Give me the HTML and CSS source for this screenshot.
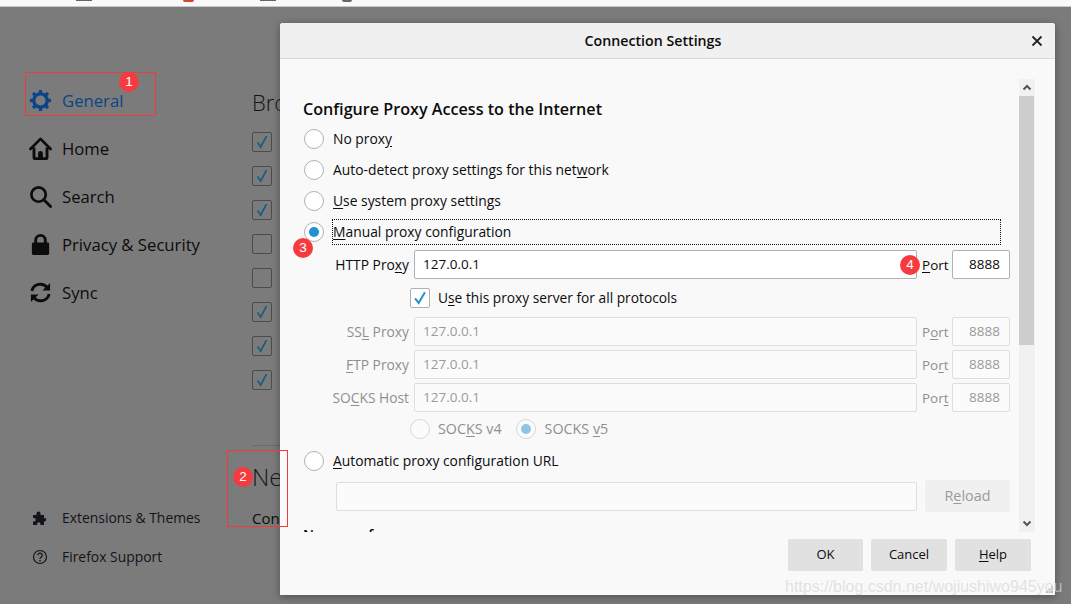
FILE: index.html
```html
<!DOCTYPE html>
<html lang="en">
<head>
    <meta charset="UTF-8">
    <title>Connection Settings</title>
    <link rel="stylesheet" href="styles.css">
</head>
<body>
    <div class="topstrip">
        <span class="tab-mark tm1"></span>
        <span class="tab-mark tm2"></span>
        <span class="tab-mark tm3"></span>
        <span class="tab-mark tm4"></span>
    </div>

    <div class="prefs">
        <nav class="sidebar">
            <ul class="cats">
                <li class="active">
                    <svg class="cat-icon" viewBox="0 0 24 24"><circle cx="12" cy="12" r="7" fill="none" stroke="currentColor" stroke-width="3.400"/><path d="M12 1v5M12 18v5M1 12h5M18 12h5M4.200 4.200l3.600 3.600M16.200 16.200l3.600 3.600M19.800 4.200l-3.600 3.600M7.800 16.200l-3.600 3.600" stroke="currentColor" stroke-width="3.400"/></svg>
                    General
                </li>
                <li>
                    <svg class="cat-icon" viewBox="0 0 24 24"><path d="M1.500 12.500 12 2l10.500 10.500" fill="none" stroke="currentColor" stroke-width="2.800" stroke-linejoin="round" stroke-linecap="round"/><path d="M5.200 11v10a1.500 1.500 0 0 0 1.500 1.500h10.600a1.500 1.500 0 0 0 1.500-1.500V11" fill="none" stroke="currentColor" stroke-width="3"/><path d="M9.500 22v-5a2.500 2.500 0 0 1 5 0v5z" fill="currentColor"/></svg>
                    Home
                </li>
                <li>
                    <svg class="cat-icon" viewBox="0 0 24 24"><circle cx="10" cy="10" r="7.500" fill="none" stroke="currentColor" stroke-width="2.800"/><path d="m15.500 15.500 7 7" stroke="currentColor" stroke-width="3" stroke-linecap="round"/></svg>
                    Search
                </li>
                <li>
                    <svg class="cat-icon" viewBox="0 0 24 24"><path d="M7 11V7.500a5 5 0 0 1 10 0V11" fill="none" stroke="currentColor" stroke-width="3"/><rect x="3" y="10" width="18" height="13" rx="1.500" fill="currentColor"/></svg>
                    Privacy &amp; Security
                </li>
                <li>
                    <svg class="cat-icon" viewBox="0 0 24 24"><path d="M3 10.500A9 9 0 0 1 19 7" fill="none" stroke="currentColor" stroke-width="3"/><path d="M22 2v8h-8z" fill="currentColor"/><path d="M21 13.500A9 9 0 0 1 5 17" fill="none" stroke="currentColor" stroke-width="3"/><path d="M2 22v-8h8z" fill="currentColor"/></svg>
                    Sync
                </li>
            </ul>
            <ul class="links">
                <li>
                    <svg class="link-icon" viewBox="0 0 16 16"><path d="M1 5h3.500V3.500a2 2 0 0 1 4 0V5H12v3h.5a1.800 1.800 0 0 1 0 3.600H12V15H8.500v-1a1.700 1.700 0 0 0-3.400 0v1H1v-3.500h1a1.800 1.800 0 0 0 0-3.600H1z" fill="currentColor"/></svg>
                    Extensions &amp; Themes
                </li>
                <li>
                    <svg class="link-icon" viewBox="0 0 16 16"><circle cx="8" cy="8" r="6.500" fill="none" stroke="currentColor" stroke-width="1.200"/><path d="M5.800 6.300a2.200 2.200 0 1 1 3.300 1.900C8.300 8.700 8 9 8 10" fill="none" stroke="currentColor" stroke-width="1.300"/><circle cx="8" cy="11.800" r=".9" fill="currentColor"/></svg>
                    Firefox Support
                </li>
            </ul>
        </nav>
        <main class="content">
            <h2 class="pane-title">Browsing</h2>
            <div class="checks">
                <span class="pref-check on"><svg viewBox="0 0 20 20"><path d="m5 10.500 3.500 5L15 3.500"/></svg></span>
                <span class="pref-check on"><svg viewBox="0 0 20 20"><path d="m5 10.500 3.500 5L15 3.500"/></svg></span>
                <span class="pref-check on"><svg viewBox="0 0 20 20"><path d="m5 10.500 3.500 5L15 3.500"/></svg></span>
                <span class="pref-check"></span>
                <span class="pref-check"></span>
                <span class="pref-check on"><svg viewBox="0 0 20 20"><path d="m5 10.500 3.500 5L15 3.500"/></svg></span>
                <span class="pref-check on"><svg viewBox="0 0 20 20"><path d="m5 10.500 3.500 5L15 3.500"/></svg></span>
                <span class="pref-check on"><svg viewBox="0 0 20 20"><path d="m5 10.500 3.500 5L15 3.500"/></svg></span>
            </div>
            <hr class="pane-rule">
            <h2 class="pane-title net">Network Settings</h2>
            <p class="pane-text">Configure</p>
        </main>
    </div>

    <section class="dialog">
        <header class="dialog-head">
            <span class="dialog-title">Connection Settings</span>
            <svg class="close" viewBox="0 0 12 12"><path d="m1.500 1.500 9 9M10.500 1.500l-9 9"/></svg>
        </header>
        <div class="dialog-body">
            <div class="scroll-pane">
                <h3 class="section-title">Configure Proxy Access to the Internet</h3>

                <label class="radio-row"><span class="radio"></span><span class="row-text">No prox<u>y</u></span></label>
                <label class="radio-row"><span class="radio"></span><span class="row-text">Auto-detect proxy settings for this net<u>w</u>ork</span></label>
                <label class="radio-row"><span class="radio"></span><span class="row-text"><u>U</u>se system proxy settings</span></label>
                <label class="radio-row manual"><span class="radio checked"></span><span class="focus-label"><u>M</u>anual proxy configuration</span></label>

                <div class="proxy-row">
                    <span class="proxy-label">HTTP Pro<u>x</u>y</span>
                    <span class="field host">127.0.0.1</span>
                    <span class="port-label"><u>P</u>ort</span>
                    <span class="field port">8888</span>
                </div>
                <label class="all-protocols"><span class="dlg-check"><svg viewBox="0 0 20 20"><path d="m4.500 10.500 4 5L15.500 3.500"/></svg></span><span class="row-text">U<u>s</u>e this proxy server for all protocols</span></label>

                <div class="proxy-row off">
                    <span class="proxy-label">SS<u>L</u> Proxy</span>
                    <span class="field host">127.0.0.1</span>
                    <span class="port-label">P<u>o</u>rt</span>
                    <span class="field port">8888</span>
                </div>
                <div class="proxy-row off">
                    <span class="proxy-label"><u>F</u>TP Proxy</span>
                    <span class="field host">127.0.0.1</span>
                    <span class="port-label">Po<u>r</u>t</span>
                    <span class="field port">8888</span>
                </div>
                <div class="proxy-row off">
                    <span class="proxy-label">SO<u>C</u>KS Host</span>
                    <span class="field host">127.0.0.1</span>
                    <span class="port-label">Por<u>t</u></span>
                    <span class="field port">8888</span>
                </div>

                <div class="socks-row">
                    <span class="radio off"></span><span class="socks-text row-text">SOC<u>K</u>S v4</span>
                    <span class="radio off checked"></span><span class="socks-text row-text">SOCKS <u>v</u>5</span>
                </div>

                <label class="radio-row auto"><span class="radio"></span><span class="row-text"><u>A</u>utomatic proxy configuration URL</span></label>
                <div class="url-row">
                    <span class="field url"></span>
                    <span class="reload">R<u>e</u>load</span>
                </div>
                <h3 class="section-title next">No proxy for</h3>
            </div>
            <div class="scrollbar">
                <svg class="arrow" viewBox="0 0 10 6"><path d="m1.500 5 3.500-3.500L8.500 5"/></svg>
                <div class="track"><div class="thumb"></div></div>
                <svg class="arrow" viewBox="0 0 10 6"><path d="m1.500 1 3.500 3.500L8.500 1"/></svg>
            </div>
        </div>
        <footer class="dialog-foot">
            <span class="btn ok">OK</span>
            <span class="btn">Cancel</span>
            <span class="btn"><u>H</u>elp</span>
        </footer>
        <svg class="grip" viewBox="0 0 7 7"><path d="M5 0h2v2H5zM2.500 2.500h2v2h-2zM5 2.500h2v2H5zM0 5h2v2H0zM2.500 5h2v2h-2zM5 5h2v2H5z"/></svg>
    </section>

    <div class="mark box-general"></div>
    <div class="mark box-network"></div>
    <span class="badge b1">1</span>
    <span class="badge b2">2</span>
    <span class="badge b3">3</span>
    <span class="badge b4">4</span>
    <span class="watermark">https://blog.csdn.net/wojiushiwo945you</span>
</body>
</html>
```

FILE: styles.css
```css
* {
    margin: 0;
    padding: 0;
    box-sizing: border-box;
}

html, body {
    width: 1071px;
    height: 604px;
    overflow: hidden;
}

body {
    position: relative;
    background-color: #7b7b7b;
    color: #0c0c0d;
    font-family: "Open Sans", "Noto Sans", sans-serif;
    font-size: 13.5px;
}

ul {
    list-style: none;
}

u {
    text-underline-offset: 2px;
}

/* strip of the browser chrome above the modal overlay */
.topstrip {
    height: 7px;
    background-color: #f9f9f9;
    border-bottom: 1px solid #c8c8c8;
    position: relative;
}

.tab-mark {
    position: absolute;
    top: 0;
    width: 16px;
    height: 1px;
    background-color: #666;
}

.tm1 { left: 76px; }
.tm2 { left: 183px; width: 11px; height: 2px; background-color: #d9452f; border-radius: 0 0 5px 5px; }
.tm3 { left: 260px; }
.tm4 { left: 342px; width: 10px; height: 2px; border-radius: 0 0 5px 5px; }

.prefs {
    display: flex;
    height: 597px;
}

.sidebar {
    width: 252px;
    padding: 69px 0 0 29px;
    display: flex;
    flex-direction: column;
    font-size: 16.7px;
}

.cats li {
    height: 48px;
    display: flex;
    align-items: center;
    gap: 10px;
}

.cats .active {
    color: #0c4488;
}

.cat-icon {
    width: 23px;
    height: 23px;
    flex: none;
}

.links {
    margin-top: 182px;
    font-size: 13.9px;
    color: #14141a;
}

.links li {
    height: 39px;
    display: flex;
    align-items: center;
    gap: 14px;
    padding-left: 3px;
}

.link-icon {
    width: 16px;
    height: 16px;
    flex: none;
}

.content {
    flex: 1;
    overflow: hidden;
}

.pane-title {
    font-size: 22px;
    font-weight: 300;
    white-space: nowrap;
    color: #14141a;
}

.content > .pane-title:first-child {
    margin-top: 78px;
    line-height: 34px;
}

.checks {
    margin-top: 13px;
    display: flex;
    flex-direction: column;
    gap: 14px;
}

.pref-check {
    display: block;
    width: 20px;
    height: 20px;
    border: 1px solid #4c4c4c;
    border-radius: 2px;
}

.pref-check svg {
    display: block;
    width: 18px;
    height: 18px;
}

.pref-check path {
    fill: none;
    stroke: #1b5e80;
    stroke-width: 2;
}

.pane-rule {
    width: 28px;
    margin-top: 55px;
    border: 0;
    border-top: 1px solid #6a6a6a;
}

.pane-title.net {
    font-size: 24px;
    margin-top: 15px;
    line-height: 32px;
}

.pane-text {
    margin-top: 15px;
    font-size: 15px;
    line-height: 20px;
    white-space: nowrap;
}

/* modal dialog */
.dialog {
    position: absolute;
    left: 280px;
    top: 23px;
    width: 775px;
    height: 572px;
    background-color: #f9f9f9;
    border-radius: 3px 3px 0 0;
    box-shadow: 0 2px 8px rgba(0, 0, 0, 0.35);
    display: flex;
    flex-direction: column;
}

.dialog-head {
    height: 36px;
    flex: none;
    background-color: #f0f0f0;
    border-bottom: 1px solid #d7d7db;
    border-radius: 3px 3px 0 0;
    position: relative;
    display: flex;
    align-items: center;
    justify-content: center;
    padding-right: 29px;
}

.dialog-title {
    font-weight: 600;
    font-size: 14.2px;
    color: #0c0c0d;
}

.close {
    position: absolute;
    right: 12px;
    top: 12px;
    width: 12px;
    height: 12px;
}

.close path {
    fill: none;
    stroke: #222;
    stroke-width: 1.800;
}

.dialog-body {
    height: 474px;
    flex: none;
    display: flex;
    padding: 20px 20px 1px 23px;
}

.scroll-pane {
    width: 707px;
    height: 453px;
    overflow: hidden;
    flex: none;
}

.section-title {
    font-size: 16.150px;
    font-weight: 600;
    line-height: 20px;
    margin-top: 20px;
    margin-bottom: 4.500px;
}

.section-title.next {
    font-size: 14px;
    margin-top: 13px;
}

.radio-row {
    display: flex;
    align-items: center;
    gap: 9px;
    height: 31px;
    padding-left: 1px;
    font-size: 13.850px;
}

/* Open Sans sits a pixel lower than the row's radio or checkbox */
.row-text {
    position: relative;
    top: -1px;
}

.radio {
    display: inline-block;
    position: relative;
    width: 20px;
    height: 20px;
    flex: none;
    background-color: #fff;
    border: 1px solid #b1b1b3;
    border-radius: 50%;
}

.radio.checked::after {
    content: "";
    position: absolute;
    left: 4px;
    top: 4px;
    width: 10px;
    height: 10px;
    border-radius: 50%;
    background-color: #2292d0;
}

.radio.off {
    background-color: #fbfbfb;
    border-color: #d8d8d8;
}

.radio.off.checked::after {
    background-color: #8ec5e4;
}

.focus-label {
    flex: 1;
    height: 26px;
    line-height: 24px;
    border: 1px dotted #111;
    margin-left: -1px;
}

.radio-row.manual {
    width: 698px;
}

.proxy-row {
    display: flex;
    align-items: center;
    height: 29px;
    margin-top: 2.500px;
}

.proxy-label {
    width: 106px;
    text-align: right;
    white-space: nowrap;
    flex: none;
    font-size: 13.800px;
}

.field {
    display: block;
    height: 29px;
    line-height: 27px;
    background-color: #fff;
    border: 1px solid #b1b1b3;
    border-radius: 2px;
    padding: 0 8px;
    white-space: nowrap;
}

.host {
    width: 503px;
    margin-left: 5px;
}

.port-label {
    width: 35px;
    padding-left: 5px;
    flex: none;
}

.port {
    width: 58px;
    text-align: right;
    padding: 0 9px 0 0;
}

.proxy-row.off {
    margin-top: 4px;
    color: #8f8f8f;
}

.proxy-row.off .field {
    background-color: #fbfbfb;
    border-color: #dedede;
    color: #9a9a9a;
}

.all-protocols {
    display: flex;
    align-items: center;
    gap: 8px;
    height: 30px;
    padding-left: 107px;
    margin-top: 4px;
    font-size: 13.750px;
}

.dlg-check {
    display: block;
    width: 20px;
    height: 20px;
    background-color: #fff;
    border: 1px solid #b1b1b3;
    border-radius: 2px;
}

.dlg-check svg {
    display: block;
    width: 18px;
    height: 18px;
}

.dlg-check path {
    fill: none;
    stroke: #2292d0;
    stroke-width: 2.200;
}

.socks-row {
    display: flex;
    align-items: center;
    height: 30px;
    margin-top: 2px;
    padding-left: 107px;
    color: #8f8f8f;
    font-size: 14.300px;
}

.socks-text {
    margin-left: 8px;
    margin-right: 14px;
}

.socks-row .radio.checked + .socks-text {
    margin-left: 9px;
}

.radio-row.auto {
    margin-top: 1.500px;
}

.url-row {
    display: flex;
    align-items: center;
    margin-top: 3.500px;
}

.url {
    width: 581px;
    margin-left: 33px;
    background-color: #fbfbfb;
    border-color: #dedede;
}

.reload {
    width: 85px;
    height: 32px;
    line-height: 32px;
    margin-left: 8px;
    text-align: center;
    background-color: #f0f0f0;
    border-radius: 2px;
    color: #9a9a9a;
    font-size: 14.400px;
}

.scrollbar {
    width: 16px;
    height: 453px;
    margin-left: 9px;
    flex: none;
    display: flex;
    flex-direction: column;
    background-color: #f1f1f1;
}

.arrow {
    display: block;
    width: 16px;
    height: 17px;
    padding: 5px 3px;
    flex: none;
}

.arrow path {
    fill: none;
    stroke: #555;
    stroke-width: 2;
}

.track {
    flex: 1;
}

.thumb {
    width: 15px;
    height: 249px;
    background-color: #cdcdcd;
}

.dialog-foot {
    display: flex;
    justify-content: flex-end;
    gap: 8px;
    padding: 6px 24px 0 0;
}

.btn {
    display: block;
    width: 76px;
    height: 32px;
    line-height: 30px;
    text-align: center;
    background-color: #e1e1e1;
    border-radius: 2px;
    font-size: 13px;
}

.btn.ok {
    width: 75px;
}

.grip {
    position: absolute;
    right: 2px;
    bottom: 2px;
    width: 7px;
    height: 7px;
    fill: #b8b8b8;
}

/* screenshot annotations */
.mark {
    position: absolute;
    border: 1px solid #f13a3a;
}

.box-general {
    left: 25px;
    top: 72px;
    width: 131px;
    height: 44px;
}

.box-network {
    left: 227px;
    top: 450px;
    width: 61px;
    height: 77px;
}

.badge {
    position: absolute;
    width: 20px;
    height: 20px;
    line-height: 20px;
    text-align: center;
    border-radius: 50%;
    background-color: #f53b3f;
    color: #fff;
    font-family: "Liberation Sans", sans-serif;
    font-size: 13.500px;
}

.b1 { left: 119px; top: 72px; }
.b2 { left: 233px; top: 467px; }
.b3 { left: 293px; top: 238px; }
.b4 { left: 900px; top: 255px; }

.watermark {
    position: absolute;
    left: 785px;
    top: 578px;
    font-family: "Liberation Sans", sans-serif;
    font-size: 16px;
    color: rgba(215, 215, 215, 0.7);
    white-space: nowrap;
}
```
